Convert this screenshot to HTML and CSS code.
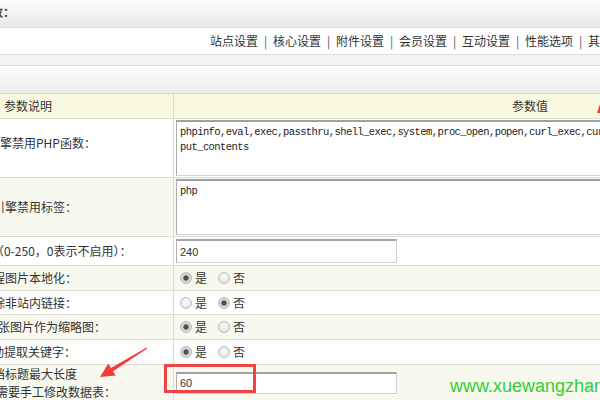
FILE: index.html
```html
<!DOCTYPE html>
<html lang="zh-CN">
<head>
<meta charset="utf-8">
<title>系统配置参数</title>
<link rel="stylesheet" href="styles.css">
</head>
<body>
<div class="page">
  <div class="titlebar"><div class="title"><b>DedeCMS系统配置参数：</b></div></div>
  <div class="nav">
    <span>站点设置</span><span class="sep">|</span><span>核心设置</span><span class="sep">|</span><span>附件设置</span><span class="sep">|</span><span>会员设置</span><span class="sep">|</span><span>互动设置</span><span class="sep">|</span><span>性能选项</span><span class="sep">|</span><span>其它选项</span>
  </div>
  <div class="gap"></div>
  <div class="subbar"></div>

  <div class="params">
    <div class="row head">
      <div class="key">参数说明</div>
      <div class="val center">参数值</div>
    </div>
    <div class="row tall">
      <div class="key up"><span class="cut40">模板引擎禁用PHP函数：</span></div>
      <div class="val"><textarea class="area" wrap="off">phpinfo,eval,exec,passthru,shell_exec,system,proc_open,popen,curl_exec,curl_multi_exec,parse_ini_file,show_source,file_
put_contents</textarea></div>
    </div>
    <div class="row tall alt">
      <div class="key"><span class="cut35">模板引擎禁用标签：</span></div>
      <div class="val"><textarea class="area" wrap="off">php</textarea></div>
    </div>
    <div class="row mid">
      <div class="key"><span class="cut84">自动摘要长度（0-250，0表示不启用）：</span></div>
      <div class="val"><input class="field" type="text" value="240"></div>
    </div>
    <div class="row short alt">
      <div class="key"><span class="cut23">远程图片本地化：</span></div>
      <div class="val"><div class="radios"><label class="opt"><input class="radio" type="radio" name="r1" checked>是</label><label class="opt"><input class="radio" type="radio" name="r1">否</label></div></div>
    </div>
    <div class="row short thin">
      <div class="key"><span class="cut23">删除非站内链接：</span></div>
      <div class="val"><div class="radios"><label class="opt"><input class="radio" type="radio" name="r2">是</label><label class="opt"><input class="radio" type="radio" name="r2" checked>否</label></div></div>
    </div>
    <div class="row short alt">
      <div class="key"><span class="cut54">提取第一张图片作为缩略图：</span></div>
      <div class="val"><div class="radios"><label class="opt"><input class="radio" type="radio" name="r3" checked>是</label><label class="opt"><input class="radio" type="radio" name="r3">否</label></div></div>
    </div>
    <div class="row short">
      <div class="key"><span class="cut24">自动提取关键字：</span></div>
      <div class="val"><div class="radios"><label class="opt"><input class="radio" type="radio" name="r4" checked>是</label><label class="opt"><input class="radio" type="radio" name="r4">否</label></div></div>
    </div>
    <div class="row double alt">
      <div class="key stack"><span class="cut23">文档标题最大长度</span><span class="cut68">改此参数后需要手工修改数据表：</span></div>
      <div class="val"><input class="field low" type="text" value="60"></div>
    </div>
  </div>

  <div class="highlight"></div>
  <svg class="marks" width="600" height="400" viewBox="0 0 600 400" aria-hidden="true">
    <polygon points="146.7,347.6 111,367.9 108.3,363.6 100,377 115.7,375.6 113,371.3 147.3,348.4" fill="#f03c3c"/>
    <polygon points="597,113 600,104 600,113" fill="#f03c3c"/>
  </svg>
  <div class="watermark">www.xuewangzhan.net</div>
</div>
</body>
</html>
```
FILE: styles.css
```css
* { box-sizing: border-box; }
html, body { margin: 0; padding: 0; overflow: hidden; background: #fff; }
body {
  font: 12px/18px "Noto Sans CJK SC", "Liberation Sans", sans-serif;
  color: #333;
}
.page { position: relative; width: 886px; }

.titlebar {
  height: 28px;
  border-bottom: 1px solid #d8d8d8;
  background: linear-gradient(#fbfbfb, #e9e9e9);
  display: flex;
  align-items: center;
  padding-bottom: 4px;
}
.title {
  width: 15px;
  display: flex;
  justify-content: flex-end;
  white-space: nowrap;
  color: #5e4b1c;
}

.nav {
  height: 27px;
  border-bottom: 1px solid #dedede;
  background: #fff;
  display: flex;
  align-items: center;
  padding-left: 210px;
  white-space: nowrap;
  color: #333;
}
.sep { display: inline-block; width: 15px; text-align: center; color: #555; }

.gap { height: 11px; background: #f3f3f3; border-bottom: 1px solid #dcdcdc; }
.subbar { height: 28px; background: linear-gradient(#fff, #ebebeb); border-bottom: 1px solid #d4d4d4; }

.row {
  display: grid;
  grid-template-columns: 173px 1fr;
  border-bottom: 1px solid #dcdcd4;
  background: #fff;
}
.row.alt { background: #f8f9ee; }
.row.head { height: 25px; background: #f9f9e2; }
.row.tall { height: 59px; }
.row.mid { height: 29px; }
.row.short { height: 25px; }
.row.short.thin { height: 24px; }
.row.double { height: 36px; }

.key {
  display: flex;
  align-items: center;
  padding-left: 4px;
  overflow: hidden;
  white-space: nowrap;
}
.key.up { padding-bottom: 11px; }
.key.stack { flex-direction: column; align-items: flex-start; justify-content: center; }

.val {
  border-left: 1px solid #dcdcd4;
  display: flex;
  align-items: center;
  padding-left: 2px;
  overflow: hidden;
}
.val.center { justify-content: center; padding-left: 0; }

.cut23 { margin-left: -23px; }
.cut24 { margin-left: -24px; }
.cut35 { margin-left: -35px; }
.cut40 { margin-left: -40px; }
.cut54 { margin-left: -54px; }
.cut68 { margin-left: -68px; }
.cut84 { margin-left: -84px; }

.area {
  display: block;
  width: 600px;
  height: 56px;
  margin: 0;
  padding: 3px 3px 0;
  border: 1px solid;
  border-top-width: 2px;
  border-color: #a0a0a0 #d4d4d4 #d4d4d4 #acacac;
  font: 10.5px/15px "Liberation Mono", monospace;
  letter-spacing: -0.58px;
  color: #222;
  background: #fff;
  resize: none;
  overflow: hidden;
  outline: none;
}

.field {
  width: 221px;
  height: 24px;
  margin: 0;
  padding: 0 3px;
  border: 1px solid;
  border-top-width: 2px;
  border-color: #a3a3a3 #d2d2d2 #d2d2d2 #b0b0b0;
  font: 11px "Liberation Sans", sans-serif;
  color: #333;
  background: #fff;
  outline: none;
}
.field.low { height: 22px; }

.radios { display: flex; align-items: center; gap: 11px; padding-left: 4px; }
.opt { display: inline-flex; align-items: center; }
.radio {
  appearance: none;
  -webkit-appearance: none;
  width: 12px;
  height: 12px;
  margin: 0 3px 0 0;
  border: 1px solid #bcbcbc;
  border-radius: 50%;
  background: radial-gradient(circle at 50% 40%, #fbfbfb 0, #dedede 100%);
}
.radio:checked {
  background: radial-gradient(circle, #4f4f4f 0 2.2px, #cfcfcf 3px, #e4e4e4 100%);
}

.highlight {
  position: absolute;
  left: 164px;
  top: 364px;
  width: 92px;
  height: 29px;
  border: 3px solid #f04444;
}
.marks { position: absolute; left: 0; top: 0; }
.watermark {
  position: absolute;
  left: 450px;
  top: 375px;
  font: 18px/22px "Liberation Sans", sans-serif;
  color: #33cc33;
  white-space: nowrap;
}
```
